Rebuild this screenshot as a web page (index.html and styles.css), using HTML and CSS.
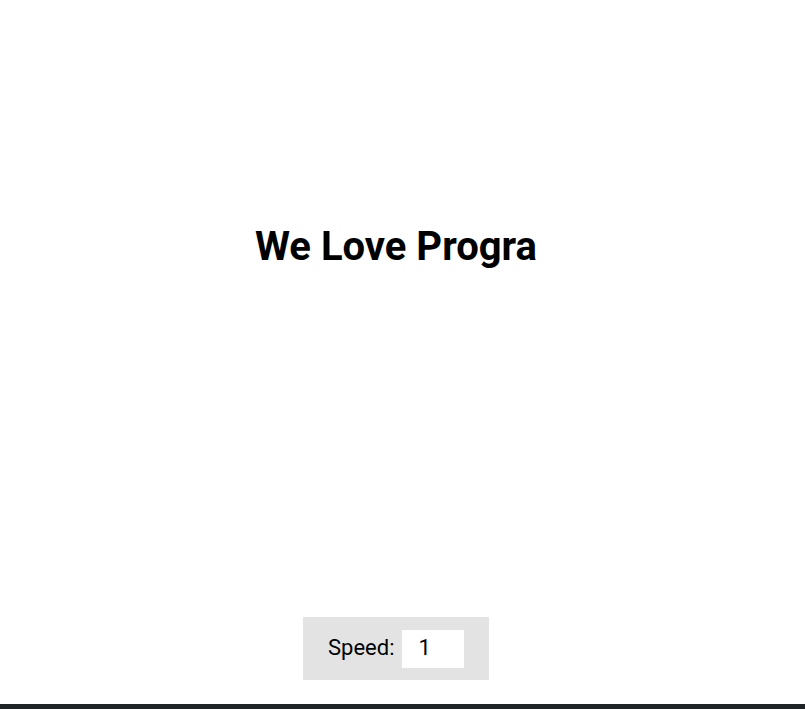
FILE: index.html
```html
<!DOCTYPE html>
<html lang="en">
<head>
<meta charset="UTF-8">
<title>Auto Text Effect</title>
<link rel="stylesheet" href="styles.css">
</head>
<body>
<div class="page">
  <div class="content">
    <h1 class="title">We Love Progra</h1>
    <div class="controls">
      <label class="label" for="speed">Speed:</label>
      <input class="speed-input" type="number" id="speed" value="1" min="1" max="10" step="1">
    </div>
  </div>
  <div class="bottom-bar"></div>
</div>
</body>
</html>
```
FILE: styles.css
```css
* { box-sizing: border-box; }
html, body { margin: 0; padding: 0; background: #ffffff; }
body { font-family: Roboto, "Liberation Sans", sans-serif; color: #000; }
.page {
  height: 709px;
  display: flex;
  flex-direction: column;
  overflow: hidden;
}
.content {
  width: 792px;
  flex: 1;
  display: flex;
  flex-direction: column;
  align-items: center;
}
.title {
  margin: 223px 0 0 0;
  font-size: 40px;
  font-weight: 700;
  line-height: 47px;
}
.controls {
  margin-top: auto;
  margin-bottom: 24px;
  width: 186px;
  height: 63px;
  background: #e3e3e3;
  display: flex;
  align-items: center;
  padding-left: 25px;
  gap: 8px;
}
.label { font-size: 22px; line-height: 24px; margin-top: -2px; }
.speed-input {
  width: 62px;
  height: 38px;
  border: none;
  outline: none;
  background: #fff;
  font-family: Roboto, "Liberation Sans", sans-serif;
  font-size: 22px;
  padding: 0 0 2px 16px;
  color: #000;
}
.bottom-bar {
  width: 100%;
  height: 5px;
  background: #1f2427;
  flex-shrink: 0;
}
```
